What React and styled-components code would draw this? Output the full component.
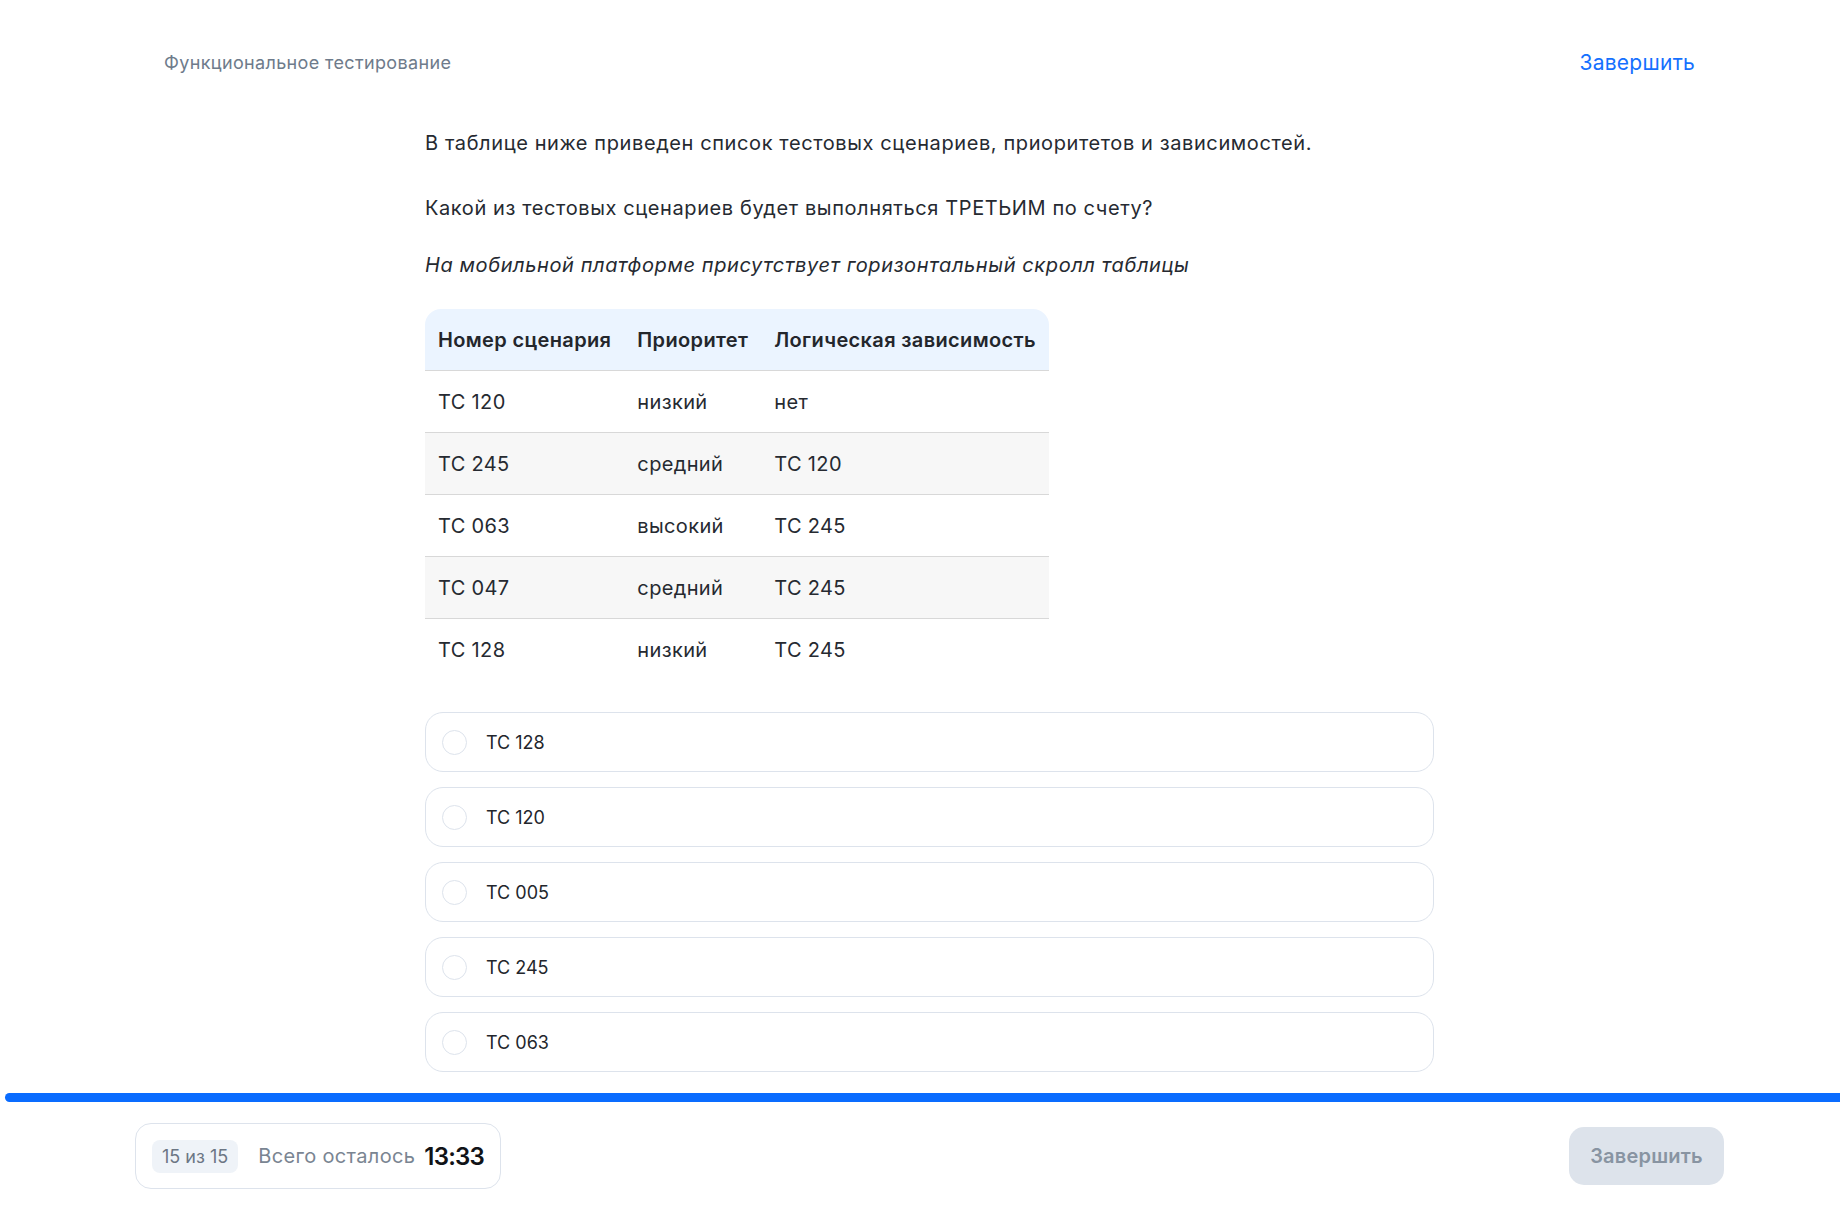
import React from "react";
import styled, { createGlobalStyle } from "styled-components";

const GlobalStyle = createGlobalStyle`
  html, body { margin: 0; padding: 0; background: #ffffff; }
  body { font-family: Inter, "Noto Sans", "Liberation Sans", sans-serif; color: #262a31; }
  * { box-sizing: border-box; }
`;

const Page = styled.div`
  height: 1210px;
  display: flex;
  flex-direction: column;
  overflow: hidden;
`;

const Header = styled.header`
  display: flex;
  justify-content: space-between;
  align-items: center;
  padding: 50px 145px 0 164px;
  height: 74px;
`;

const Breadcrumb = styled.div`
  font-size: 18px;
  color: #6e7b8b;
  letter-spacing: 0.35px;
`;

const LinkButton = styled.button`
  border: none;
  background: none;
  padding: 0;
  font-family: inherit;
  font-size: 21px;
  color: #1570ff;
  cursor: pointer;
  letter-spacing: 0.25px;
`;

const Main = styled.main`
  flex: 1;
  padding: 57px 0 0 425px;
  width: 1434px;
  box-sizing: content-box;
`;

const Content = styled.div`
  width: 1009px;
`;

const Paragraph = styled.p`
  margin: 0 0 ${(p) => p.$gap}px;
  font-size: 20px;
  line-height: 24px;
  font-style: ${(p) => (p.$italic ? "italic" : "normal")};
  letter-spacing: 0.6px;
`;

const TableWrap = styled.div`
  display: inline-block;
  margin-bottom: 27px;
`;

const Table = styled.table`
  border-collapse: separate;
  border-spacing: 0;
  font-size: 20px;
  letter-spacing: 0.35px;
`;

const Th = styled.th`
  background: #ebf4ff;
  height: 62px;
  padding: 0 13px;
  text-align: left;
  font-weight: 600;
  color: #23262c;
  border-bottom: 1px solid #d8d8d8;
  white-space: nowrap;
  &:first-child { border-top-left-radius: 16px; }
  &:last-child { border-top-right-radius: 16px; }
`;

const Tr = styled.tr`
  background: ${(p) => (p.$alt ? "#f7f7f7" : "#ffffff")};
`;

const Td = styled.td`
  height: 62px;
  padding: 0 13px;
  color: #262a31;
  white-space: nowrap;
  border-bottom: ${(p) => (p.$last ? "none" : "1px solid #d8d8d8")};
`;

const Options = styled.div`
  display: flex;
  flex-direction: column;
  gap: 15px;
`;

const Option = styled.label`
  display: flex;
  align-items: center;
  gap: 19px;
  height: 60px;
  padding: 0 16px;
  border: 1px solid #dde3ec;
  border-radius: 18px;
  cursor: pointer;
  font-size: 18px;
  color: #23262c;
  letter-spacing: 0;
`;

const Radio = styled.span`
  width: 25px;
  height: 25px;
  border-radius: 50%;
  border: 1.5px solid #dde3ec;
  flex-shrink: 0;
`;

const Progress = styled.div`
  height: 9px;
  margin-left: 5px;
  background: #0a6cff;
  border-radius: 5px 0 0 5px;
`;

const Footer = styled.footer`
  display: flex;
  justify-content: space-between;
  align-items: center;
  padding: 21px 116px 21px 135px;
`;

const TimerBox = styled.div`
  display: flex;
  align-items: center;
  height: 66px;
  padding: 0 16px;
  border: 1px solid #dde3ec;
  border-radius: 16px;
`;

const Counter = styled.span`
  background: #eff3f8;
  border-radius: 8px;
  padding: 0 10px;
  height: 33px;
  display: inline-flex;
  align-items: center;
  font-size: 18px;
  color: #6c7684;
  letter-spacing: 0;
  margin-right: 20px;
`;

const TimeLabel = styled.span`
  font-size: 20px;
  color: #7a8592;
  letter-spacing: 0.35px;
  margin-right: 9px;
`;

const Time = styled.span`
  font-size: 24px;
  font-weight: 600;
  color: #111317;
  letter-spacing: -0.8px;
`;

const FinishButton = styled.button`
  height: 58px;
  width: 155px;
  border: none;
  border-radius: 15px;
  background: #dde3eb;
  color: #8894a2;
  font-family: inherit;
  font-size: 20px;
  font-weight: 600;
  letter-spacing: 0.2px;
`;

const rows = [
  ["ТС 120", "низкий", "нет"],
  ["ТС 245", "средний", "ТС 120"],
  ["ТС 063", "высокий", "ТС 245"],
  ["ТС 047", "средний", "ТС 245"],
  ["ТС 128", "низкий", "ТС 245"],
];

const answers = ["ТС 128", "ТС 120", "ТС 005", "ТС 245", "ТС 063"];

export default function App() {
  return (
    <Page>
      <GlobalStyle />
      <Header>
        <Breadcrumb>Функциональное тестирование</Breadcrumb>
        <LinkButton>Завершить</LinkButton>
      </Header>
      <Main>
        <Content>
          <Paragraph $gap={41}>
            В таблице ниже приведен список тестовых сценариев, приоритетов и зависимостей.
          </Paragraph>
          <Paragraph $gap={33}>Какой из тестовых сценариев будет выполняться ТРЕТЬИМ по счету?</Paragraph>
          <Paragraph $gap={32} $italic>
            На мобильной платформе присутствует горизонтальный скролл таблицы
          </Paragraph>
          <TableWrap>
            <Table>
              <thead>
                <tr>
                  <Th>Номер сценария</Th>
                  <Th>Приоритет</Th>
                  <Th>Логическая зависимость</Th>
                </tr>
              </thead>
              <tbody>
                {rows.map((r, i) => (
                  <Tr key={i} $alt={i % 2 === 1}>
                    {r.map((c, j) => (
                      <Td key={j} $last={i === rows.length - 1}>
                        {c}
                      </Td>
                    ))}
                  </Tr>
                ))}
              </tbody>
            </Table>
          </TableWrap>
          <Options>
            {answers.map((a) => (
              <Option key={a}>
                <Radio />
                {a}
              </Option>
            ))}
          </Options>
        </Content>
      </Main>
      <Progress />
      <Footer>
        <TimerBox>
          <Counter>15 из 15</Counter>
          <TimeLabel>Всего осталось</TimeLabel>
          <Time>13:33</Time>
        </TimerBox>
        <FinishButton>Завершить</FinishButton>
      </Footer>
    </Page>
  );
}
